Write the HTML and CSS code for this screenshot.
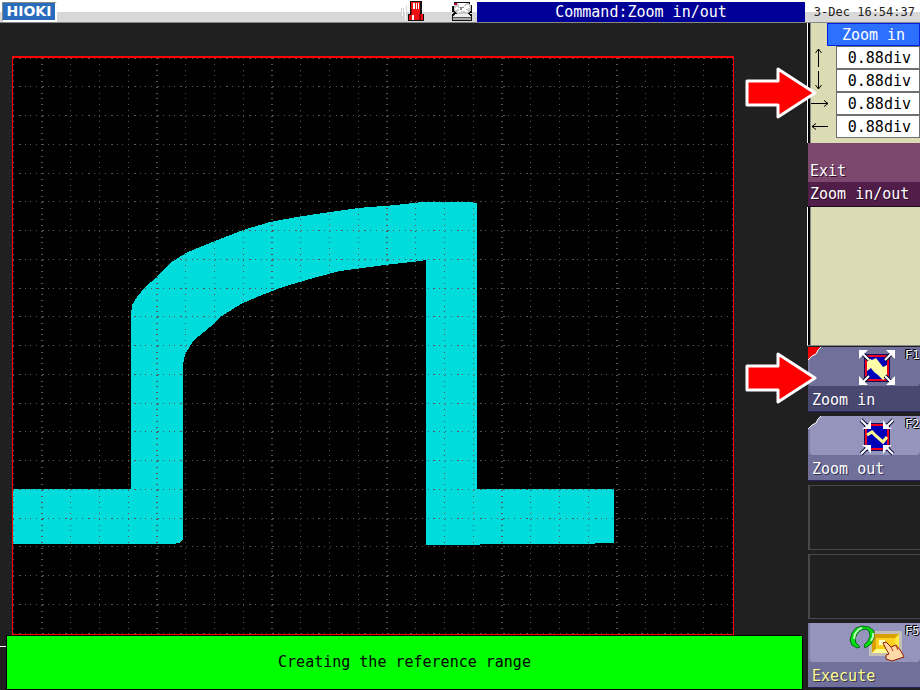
FILE: index.html
```html
<!DOCTYPE html>
<html lang="en">

<head>
    <meta charset="utf-8">
    <title>Zoom in/out</title>
    <link rel="stylesheet" href="styles.css">
</head>

<body>
    <header class="topbar">
        <div class="logo">HIOKI</div>
        <div class="status-icons">
            <svg width="24" height="23" viewBox="0 0 24 23" shape-rendering="crispEdges">
                <path d="M1 4h1v12h-1zM4 2h1v18h-1z" fill="#fff" />
                <path d="M0 8h1v8h-1zM2 8h1v8h-1zM5 6h1v10h-1z" fill="#d0d0d0" />
                <path d="M9 1h12v13h2v7h-16v-7h2z" fill="#111" />
                <path d="M10 2h9v12h3v6h-14v-5h2z" fill="#ee1111" />
                <path d="M12 3h2v6h-2zM15 3h1v6h-1zM17 3h1v6h-1zM11 15h2v5h-2z" fill="#fff" />
                <path d="M18 14h2v6h-2zM10 9h1v5h-1z" fill="#900" />
            </svg>
            <svg width="22" height="23" viewBox="0 0 22 23" shape-rendering="crispEdges">
                <path d="M3 2h16v3h2v8h-2v1h2v7H1v-6l2-3H1V6h2z" fill="#111" />
                <path d="M5 3h12l3 3v5l-4 3H6L3 10V5z" fill="#c8c8c8" />
                <path d="M7 3h8l-3 3 6-1 1 3-5 1 3 3-6-1-4 2 1-4-4 1 1-3 4 1z" fill="#fff" />
                <path d="M9 7h4v1h-2v2h-2z" fill="#888" />
                <path d="M3 3h3v2h-3z" fill="#b03" />
                <path d="M4 14h14l2 3H2z" fill="#eee" />
                <path d="M2 17h18v3H2z" fill="#aaa" />
                <path d="M2 17h18v1H2z" fill="#555" />
            </svg>
        </div>
        <div class="command">Command:Zoom in/out</div>
        <time class="clock">3-Dec 16:54:37</time>
    </header>

    <div class="screen">
        <main class="view">
            <div class="chart">
                <svg viewBox="13 58 720 576" preserveAspectRatio="none" shape-rendering="crispEdges">
                    <!-- waveform band -->
                    <path class="wave" d="M13 489H131V315L132 305L137 297L145 287L157 277L170 263L186 253L200 247L215 241L243 230L270 222L297 217L330 212L358 208L370 207L396 205L422 202H474V203H477V489H613L614 490V543L576 544H480L479 545H426V260L420 261L393 264L370 267L340 271L317 277L283 287L262 295L243 303L233 309L222 316L210 327L193 341L186 353L184 359L183 366V539L180 543L172 544H13Z" />
                    <!-- graticule -->
                    <path class="grid-h" d="M13 58.5h720M13 86.5h720M13 115.5h720M13 144.5h720M13 173.5h720M13 201.5h720M13 230.5h720M13 259.5h720M13 288.5h720M13 316.5h720M13 345.5h720M13 374.5h720M13 403.5h720M13 431.5h720M13 460.5h720M13 489.5h720M13 518.5h720M13 546.5h720M13 575.5h720M13 604.5h720M13 633.5h720" />
                    <path class="grid-v" d="M13.5 58v576M70.5 58v576M99.5 58v576M128.5 58v576M185.5 58v576M214.5 58v576M243.5 58v576M300.5 58v576M329.5 58v576M358.5 58v576M415.5 58v576M444.5 58v576M473.5 58v576M530.5 58v576M559.5 58v576M588.5 58v576M645.5 58v576M674.5 58v576M703.5 58v576M732.5 58v576" />
                    <path class="grid-v grid-major" d="M42 58v576M157 58v576M272 58v576M387 58v576M502 58v576M617 58v576" />
                </svg>
            </div>
            <div class="message" role="status">Creating the reference range</div>
        </main>

        <aside class="sidebar">
            <section class="params">
                <h2 class="params-title">Zoom in</h2>
                <label class="param">
                    <svg width="25" height="23" viewBox="0 0 25 23"><path d="M7.500 21V3M4.500 7L7.500 3L10.500 7" /></svg>
                    <input type="text" value="0.88div" aria-label="Up" readonly>
                </label>
                <label class="param">
                    <svg width="25" height="23" viewBox="0 0 25 23"><path d="M7.500 2V20M4.500 16L7.500 20L10.500 16" /></svg>
                    <input type="text" value="0.88div" aria-label="Down" readonly>
                </label>
                <label class="param">
                    <svg width="25" height="23" viewBox="0 0 25 23"><path d="M0 11.500H17M13 8.500L17 11.500L13 14.500" /></svg>
                    <input type="text" value="0.88div" aria-label="Right" readonly>
                </label>
                <label class="param">
                    <svg width="25" height="23" viewBox="0 0 25 23"><path d="M17 11.500H1M5 8.500L1 11.500L5 14.500" /></svg>
                    <input type="text" value="0.88div" aria-label="Left" readonly>
                </label>
                <svg class="pointer pointer-params" width="72" height="54" viewBox="0 0 72 54"><path d="M2 15H33V3L70 27L33 51V39H2Z" /></svg>
            </section>

            <button type="button" class="exit">
                <span class="exit-top">Exit</span>
                <span class="exit-bottom">Zoom in/out</span>
            </button>

            <div class="spacer"></div>

            <div class="keys">
                <div class="slot">
                    <button type="button" class="key key-active">
                        <span class="key-face">
                            <svg class="corner" width="14" height="14" viewBox="0 0 14 14"><path d="M0 0H13L10 3L8 7L4 9L0 13Z" fill="#f00000" /><path d="M13 0L10 3L8 7L4 9L0 13" fill="none" stroke="#fff" /></svg>
                            <svg class="icon" width="36" height="40" viewBox="0 0 36 40">
                                <path d="M5 7H31V35H5Z" fill="#101060" />
                                <path d="M6 8H30V34H6Z" fill="#f00020" />
                                <path d="M8 10H28V32H8Z" fill="#0000b8" />
                                <path d="M8 10L13 13L17 11L24 20L28 18V31L24 33L19 28L15 25L12 21L8 24Z" fill="#ffffa8" />
                                <path d="M2 5L10 13M34 5L26 13M2 37L10 29M34 37L26 29" fill="none" stroke="#101038" stroke-width="4" />
                                <path d="M2 5L10 13M34 5L26 13M2 37L10 29M34 37L26 29" fill="none" stroke="#fff" stroke-width="2" />
                                <path d="M0 3H9L6 6L4 8L0 12ZM36 3H27L30 6L32 8L36 12ZM0 38H9L6 35L4 33L0 29ZM36 38H27L30 35L32 33L36 29Z" fill="#fff" />
                            </svg>
                            <span class="fn">F1</span>
                        </span>
                        <span class="key-label">Zoom in</span>
                    </button>
                    <svg class="pointer pointer-key" width="72" height="54" viewBox="0 0 72 54"><path d="M2 15H33V3L70 27L33 51V39H2Z" /></svg>
                </div>
                <div class="slot">
                    <button type="button" class="key">
                        <span class="key-face">
                            <svg class="corner" width="14" height="14" viewBox="0 0 14 14"><path d="M0 0H13L10 3L8 7L4 9L0 13Z" fill="#202020" /><path d="M13 0L10 3L8 7L4 9L0 13" fill="none" stroke="#fff" /></svg>
                            <svg class="icon" width="36" height="40" viewBox="0 0 36 40">
                                <path d="M5 7H31V35H5Z" fill="#101060" />
                                <path d="M6 8H30V34H6Z" fill="#f00020" />
                                <path d="M8 10H28V32H8Z" fill="#0000b8" />
                                <path d="M8 19L13 16L17 20L24 26L28 21" fill="none" stroke="#ffff90" stroke-width="3" />
                                <path d="M2 4L9 11M34 4L27 11M2 38L9 31M34 38L27 31" fill="none" stroke="#101038" stroke-width="4" />
                                <path d="M2 4L9 11M34 4L27 11M2 38L9 31M34 38L27 31" fill="none" stroke="#fff" stroke-width="2" />
                                <path d="M12 4V13H3L7 10L9 8ZM24 4V13H33L29 10L27 8ZM12 38V29H3L7 32L9 34ZM24 38V29H33L29 32L27 34Z" fill="#fff" />
                            </svg>
                            <span class="fn">F2</span>
                        </span>
                        <span class="key-label">Zoom out</span>
                    </button>
                </div>
                <div class="slot empty"></div>
                <div class="slot empty"></div>
                <div class="slot">
                    <button type="button" class="key key-execute">
                        <span class="key-face">
                            <svg class="icon icon-execute" width="56" height="39" viewBox="0 0 56 39">
                                <path d="M20 8H53V33H20Z" fill="#c4c0b8" />
                                <path d="M23 11H50V30H23Z" fill="#ffe840" />
                                <path d="M23 11H50L46 15H27V26L23 30Z" fill="#d8a000" />
                                <path d="M27 15H46V26H27Z" fill="#ffd020" />
                                <path d="M30 17H36V22H30Z" fill="#ffffc0" />
                                <path d="M23 30L27 26H46L50 30Z" fill="#ffff90" />
                                <path d="M11 24L8 25L3 22L1 17L3 10L7 5L13 3L20 4L25 8L25 15L22 21L16 25L15 22L19 18L21 13L20 8L17 6L12 7L8 11L6 16L7 20Z" fill="#00e010" stroke="#086818" />
                                <path d="M5 16L6 11L10 6L13 5M22 18L24 14V10" fill="none" stroke="#b8ffb8" stroke-width="2" />
                                <path d="M34 20L37 19L42 24L47 22L52 28L55 34L49 36L43 38L37 36V32L40 31L37 26Z" fill="#ffd8a8" stroke="#901800" />
                                <path d="M42 24L44 28M47 23L49 27" stroke="#c04010" />
                            </svg>
                            <span class="fn">F5</span>
                        </span>
                        <span class="key-label">Execute</span>
                    </button>
                </div>
            </div>
        </aside>
    </div>
</body>

</html>
```
FILE: styles.css
```css
* {
    box-sizing: border-box;
}

body {
    margin: 0;
    min-height: 100vh;
    display: flex;
    flex-direction: column;
    background-color: #202020;
    color: #000;
    font-family: "DejaVu Sans Mono", monospace;
    font-size: 15px;
    line-height: 20px;
    overflow-x: hidden;
}

svg {
    display: block;
}

button,
input {
    font: inherit;
    margin: 0;
    border-radius: 0;
}

/* top bar */
.topbar {
    display: flex;
    height: 23px;
    background: linear-gradient(#fff 12px, #d8d8d8 12px);
    border-bottom: 1px solid #888;
}

.logo {
    width: 55px;
    height: 20px;
    margin: 2px 0 0 2px;
    border: 1px solid #888;
    border-right: 2px solid #fff;
    border-bottom: 2px solid #fff;
    background-color: #2a6cbc;
    color: #fff;
    font-family: "DejaVu Sans", sans-serif;
    font-weight: bold;
    font-size: 14px;
    line-height: 17px;
    text-align: center;
}

.status-icons {
    flex: 1;
    display: flex;
    justify-content: flex-end;
    gap: 26px;
    padding-right: 4px;
}

.command {
    width: 328px;
    height: 20px;
    margin-top: 2px;
    background-color: #000098;
    color: #fff;
    text-align: center;
}

.clock {
    width: 115px;
    padding: 2px 5px 0 0;
    color: #222;
    font-size: 12px;
    text-align: right;
    white-space: nowrap;
}

.screen {
    flex: 1;
    display: flex;
}

/* waveform */
.view {
    flex: 1;
    display: flex;
    flex-direction: column;
    padding-top: 33px;
}

.chart {
    flex: 1;
    display: flex;
    margin: 0 73px 0 12px;
    border: 1px solid #f00;
    border-top-width: 2px;
    background-color: #000;
}

.chart svg {
    flex: 1;
    width: 100%;
    min-width: 0;
    height: auto;
}

.wave {
    fill: #00dcdc;
}

.grid-h,
.grid-v {
    fill: none;
    stroke: #555;
    stroke-width: 1;
}

.grid-h {
    stroke-dasharray: 1 4.76 2 3.76 1 4.76 1 4.76;
}

.grid-v {
    stroke-dasharray: 1 4.76;
}

.grid-major {
    stroke-width: 2;
}

.message {
    position: relative;
    height: 55px;
    margin: 0 4px 0 6px;
    border: 1px solid #000;
    background-color: #0f0;
    line-height: 53px;
    text-align: center;
}

/* end of the rule that the message box covers */
.message::before {
    content: "";
    position: absolute;
    left: -7px;
    top: 10px;
    width: 6px;
    height: 1px;
    background-color: #fff;
}

/* sidebar */
.sidebar {
    width: 113px;
    display: flex;
    flex-direction: column;
}

.params,
.spacer {
    border-left: 1px solid #fff;
    background: linear-gradient(to right, #000 2px, #888 2px, #888 3px, #dcdcb4 3px);
}

.params {
    position: relative;
    height: 120px;
    padding-left: 3px;
}

.params-title {
    margin: 0 0 0 16px;
    height: 23px;
    border: 1px solid #0020e0;
    background-color: #2c70ff;
    color: #fff;
    font-size: 15px;
    font-weight: normal;
    line-height: 22px;
    text-align: center;
}

.param {
    display: flex;
    height: 23px;
}

.param path {
    fill: none;
    stroke: #000;
}

.param input {
    flex: 1;
    min-width: 0;
    padding: 0 8px 0 0;
    border: 1px solid #707070;
    background-color: #fff;
    color: #000;
    text-align: right;
}

.pointer {
    position: absolute;
}

.pointer path {
    fill: #f00;
    stroke: #fff;
    stroke-width: 3;
    stroke-linejoin: round;
}

.pointer-params {
    left: -63px;
    top: 43px;
}

.exit {
    display: flex;
    flex-direction: column;
    height: 64px;
    margin-left: 1px;
    padding: 0;
    border: none;
    border-bottom: 1px solid #200820;
    background-color: #501e48;
    color: #fff;
    text-align: left;
    text-shadow: 1px 1px #300828;
    white-space: nowrap;
}

.exit-top {
    width: 100%;
    height: 39px;
    padding: 18px 0 0 2px;
    background-color: #7c486e;
}

.exit-bottom {
    padding: 2px 0 0 2px;
}

.spacer {
    flex: 1;
    border-bottom: 1px solid #888;
}

.keys {
    display: flex;
    flex-direction: column;
    gap: 4px;
    padding: 1px 0 2px 1px;
}

.slot {
    position: relative;
    height: 65px;
}

.empty {
    border: 1px solid #484848;
    border-left-width: 2px;
    border-right: none;
}

.key {
    display: flex;
    flex-direction: column;
    width: 100%;
    height: 100%;
    padding: 0;
    border: none;
    border-bottom: 1px solid #24245c;
    background-color: #70709a;
    color: #fff;
    text-align: left;
    text-shadow: 1px 1px #303058;
}

.key-face {
    position: relative;
    display: flex;
    justify-content: flex-end;
    width: 100%;
    height: 39px;
    border-bottom-left-radius: 4px;
    border-bottom-right-radius: 4px;
    border-left: 2px solid #7c7ca4;
    background-color: #9494bc;
}

.key-label {
    padding: 4px 0 0 4px;
}

.key-active {
    background-color: #484870;
}

.key-active .key-face {
    background-color: #70709a;
}

.key-execute .key-label {
    color: #ffff90;
}

.corner {
    position: absolute;
    left: -2px;
    top: 0;
}

.icon {
    margin-right: 10px;
}

.icon-execute {
    margin-right: 0;
}

.fn {
    width: 15px;
    font-size: 12px;
    line-height: 16px;
    text-shadow: -1px -1px #000, -1px 0 #000, 1px 1px #000;
}

.pointer-key {
    left: -63px;
    top: 4px;
}
```
